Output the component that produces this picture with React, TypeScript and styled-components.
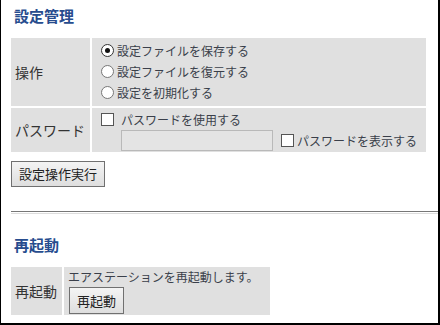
import React from 'react';
import styled, { createGlobalStyle } from 'styled-components';

const GlobalStyle = createGlobalStyle`
  html, body {
    margin: 0;
    padding: 0;
    background: #fff;
  }
  body {
    font-family: "Noto Sans CJK JP", "Noto Sans", sans-serif;
    color: #333;
  }
`;

const Frame = styled.div`
  width: 440px;
  height: 325px;
  box-sizing: border-box;
  border-left: 1px solid #000;
  border-right: 2px solid #000;
  border-bottom: 2px solid #000;
  padding: 6px 0 0 9px;
  overflow: hidden;
`;

const Heading = styled.h2<{ $top?: number }>`
  margin: ${(p) => p.$top ?? 0}px 0 12px 4px;
  font-size: 15px;
  line-height: 20px;
  font-weight: bold;
  color: #274c8e;
`;

const FormGrid = styled.div<{ $width?: string; $label?: string }>`
  display: grid;
  grid-template-columns: ${(p) => p.$label ?? '79px'} 1fr;
  gap: 2px;
  width: ${(p) => p.$width ?? '415px'};
  margin-left: 1px;
`;

const LabelCell = styled.div`
  background: #e0e0e0;
  display: flex;
  align-items: center;
  padding: 0 4px;
  font-size: 14px;
  line-height: 20px;
  color: #333;
  white-space: nowrap;
`;

const ValueCell = styled.div<{ $pad?: string }>`
  background: #e0e0e0;
  padding: ${(p) => p.$pad ?? '2px 4px 3px 4px'};
  font-size: 12px;
  color: #3a3f4a;
`;

const OptionRow = styled.label`
  display: flex;
  align-items: center;
  height: 21px;
  white-space: nowrap;
`;

const Radio = styled.span<{ $checked?: boolean }>`
  width: 13px;
  height: 13px;
  box-sizing: border-box;
  border-radius: 50%;
  border: 1px solid ${(p) => (p.$checked ? '#333' : '#777')};
  background: #fff;
  margin: 0 3px 0 5px;
  display: flex;
  align-items: center;
  justify-content: center;
  &::after {
    content: '';
    display: ${(p) => (p.$checked ? 'block' : 'none')};
    width: 5px;
    height: 5px;
    border-radius: 50%;
    background: #111;
  }
`;

const Check = styled.span<{ $left?: number; $gap?: number }>`
  width: 13px;
  height: 13px;
  box-sizing: border-box;
  border: 1px solid #555;
  background: #fff;
  margin: 0 ${(p) => p.$gap ?? 3}px 0 ${(p) => p.$left ?? 5}px;
  flex: none;
`;

const CheckRow = styled.div`
  display: flex;
  align-items: center;
  height: 18px;
  white-space: nowrap;
`;

const PasswordRow = styled.div`
  display: flex;
  align-items: center;
  margin: 2px 0 0 25px;
  white-space: nowrap;
`;

const TextBox = styled.div`
  width: 152px;
  height: 21px;
  box-sizing: border-box;
  border: 1px solid #b9b9b9;
  background: #e4e4e4;
  flex: none;
`;

const Button = styled.button<{ $top?: number; $height?: number }>`
  display: block;
  margin: ${(p) => p.$top ?? 0}px 0 0 1px;
  padding: 0 7px;
  height: ${(p) => p.$height ?? 26}px;
  border: 1px solid #707070;
  background: linear-gradient(#f4f4f4, #dedede);
  font-family: "Noto Sans CJK JP", sans-serif;
  font-size: 13px;
  line-height: 20px;
  color: #222;
`;

const Rule = styled.div`
  margin: 24px 0 0 1px;
  height: 1px;
  border-top: 1px solid #777;
  border-bottom: 1px solid #ddd;
`;

const Message = styled.div`
  line-height: 16px;
  white-space: nowrap;
`;

export default function App() {
  return (
    <>
      <GlobalStyle />
      <Frame>
        <Heading>設定管理</Heading>
        <FormGrid>
          <LabelCell>操作</LabelCell>
          <ValueCell>
            <OptionRow>
              <Radio $checked />
              設定ファイルを保存する
            </OptionRow>
            <OptionRow>
              <Radio />
              設定ファイルを復元する
            </OptionRow>
            <OptionRow>
              <Radio />
              設定を初期化する
            </OptionRow>
          </ValueCell>
          <LabelCell>パスワード</LabelCell>
          <ValueCell $pad="2px 4px 1px 4px">
            <CheckRow>
              <Check $gap={7} />
              パスワードを使用する
            </CheckRow>
            <PasswordRow>
              <TextBox />
              <Check $left={8} />
              パスワードを表示する
            </PasswordRow>
          </ValueCell>
        </FormGrid>
        <Button $top={9}>設定操作実行</Button>
        <Rule />
        <Heading $top={21}>再起動</Heading>
        <FormGrid $width="259px" $label="51px">
          <LabelCell>再起動</LabelCell>
          <ValueCell $pad="2px 10px 1px 4px">
            <Message>エアステーションを再起動します。</Message>
            <Button $top={2} $height={27}>再起動</Button>
          </ValueCell>
        </FormGrid>
      </Frame>
    </>
  );
}
